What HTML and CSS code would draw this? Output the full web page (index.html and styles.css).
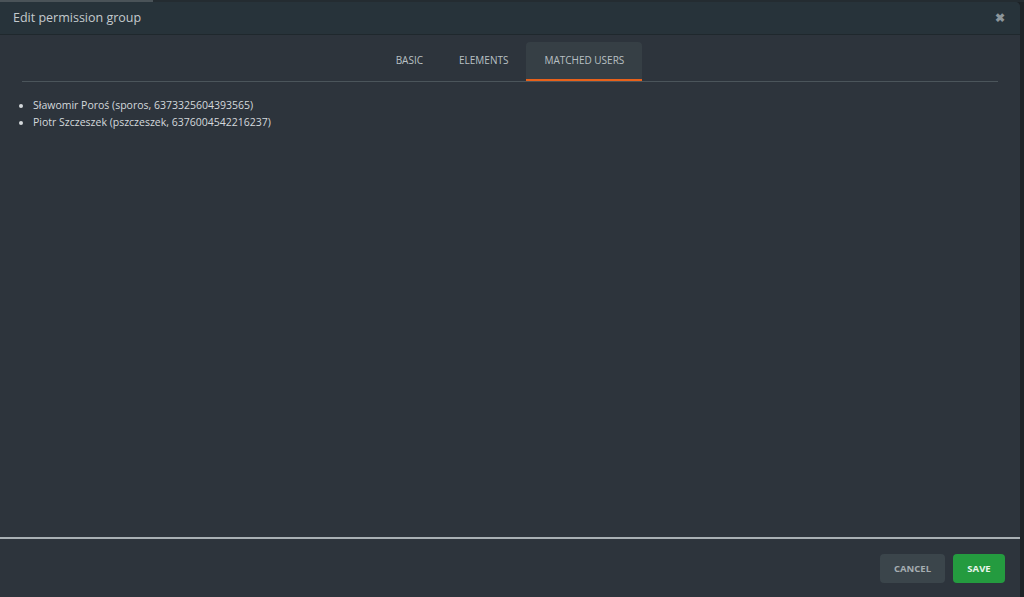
FILE: index.html
```html
<!DOCTYPE html>
<html lang="en">
<head>
    <meta charset="UTF-8">
    <meta name="viewport" content="width=device-width, initial-scale=1.0">
    <title>Edit permission group</title>
    <link rel="stylesheet" href="styles.css">
</head>
<body>
    <div class="tlo"><div class="tlo-pasek"></div></div>
    <div class="okno">
        <div class="naglowek">
            <span class="tytul">Edit permission group</span>
            <button class="zamknij">&#10006;</button>
        </div>
        <div class="tresc">
            <div class="zakladki">
                <div class="zakladka">BASIC</div>
                <div class="zakladka">ELEMENTS</div>
                <div class="zakladka aktywna">MATCHED USERS</div>
            </div>
            <ul class="lista">
                <li>Sławomir Poroś (sporos, 6373325604393565)</li>
                <li>Piotr Szczeszek (pszczeszek, 6376004542216237)</li>
            </ul>
        </div>
        <div class="stopka">
            <button class="anuluj">CANCEL</button>
            <button class="zapisz">SAVE</button>
        </div>
    </div>
</body>
</html>
```

FILE: styles.css
```css
body {
    margin: 0;
    height: 597px;
    overflow: hidden;
    background-color: #1d2327;
    font-family: "Open Sans", Arial, sans-serif;
    display: flex;
    flex-direction: column;
}

.tlo {
    height: 2px;
    background-color: #242c31;
}

.tlo-pasek {
    width: 153px;
    height: 2px;
    background-color: #4a5358;
}

.okno {
    width: 1020px;
    flex: 1;
    display: flex;
    flex-direction: column;
    background-color: #2d343c;
    border-top-right-radius: 5px;
}

.naglowek {
    height: 31px;
    display: flex;
    align-items: center;
    justify-content: space-between;
    padding: 0 15px 1px 13px;
    background-color: #27333a;
    border-bottom: 1px solid #1f282d;
    border-top-right-radius: 5px;
}

.tytul {
    color: #c4cacd;
    font-size: 12.5px;
}

.zamknij {
    background: none;
    border: none;
    color: #8c969b;
    font-size: 12px;
    font-weight: bold;
    padding: 0;
    cursor: pointer;
}

.tresc {
    flex: 1;
    padding: 7px 22px 0 22px;
}

.zakladki {
    display: flex;
    justify-content: center;
    border-bottom: 1px solid #4b555b;
}

.zakladka {
    height: 39px;
    display: flex;
    align-items: center;
    padding: 0 18px 1px 18px;
    box-sizing: border-box;
    color: #b9c0c4;
    font-size: 10px;
    font-weight: 500;
    border-bottom: 2px solid transparent;
}

.aktywna {
    background-color: #363f45;
    border-radius: 4px 4px 0 0;
    border-bottom-color: #e8611a;
}

.lista {
    margin: 15px 0 0 -12px;
    padding-left: 23px;
    color: #d4d9dc;
    font-size: 10.5px;
    line-height: 17px;
}

.stopka {
    height: 58px;
    border-top: 2px solid #a9b0b4;
    display: flex;
    justify-content: flex-end;
    align-items: center;
    gap: 8px;
    padding-right: 15px;
}

button {
    font-family: "Open Sans", Arial, sans-serif;
}

.anuluj, .zapisz {
    height: 29px;
    border: none;
    border-radius: 4px;
    font-size: 9.5px;
    font-weight: bold;
    cursor: pointer;
}

.anuluj {
    width: 65px;
    background-color: #3b454b;
    color: #a5adb1;
}

.zapisz {
    width: 52px;
    background-color: #249b3f;
    color: #e9f5ec;
}
```
